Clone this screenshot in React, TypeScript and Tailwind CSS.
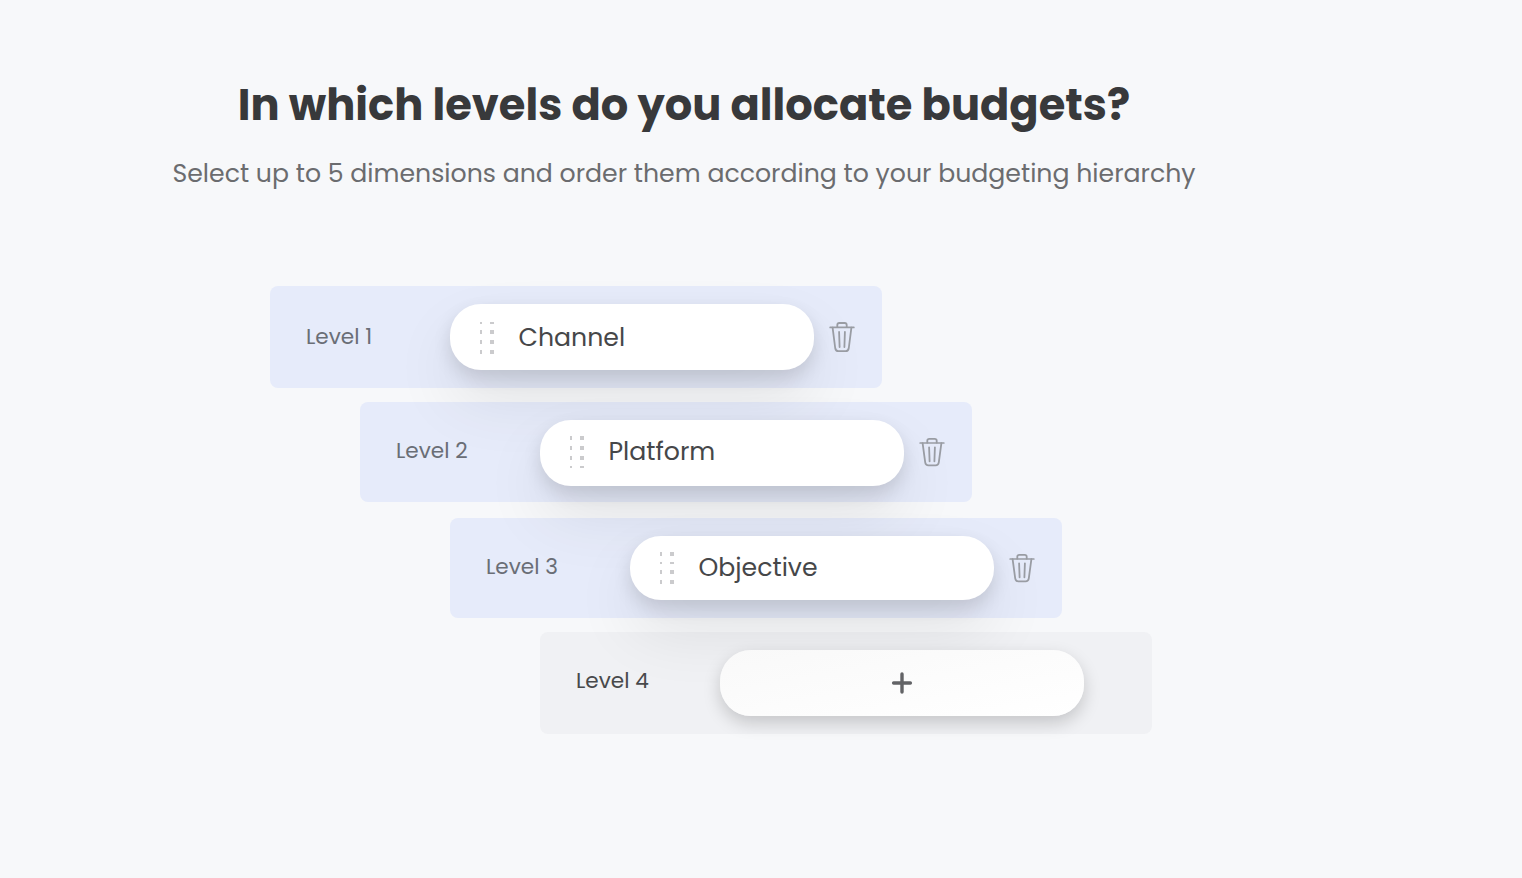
import React from 'react';

type Level = {
  label: string;
  value?: string;
  row: string;
  pill: string;
  labelStyle: string;
  valueStyle: string;
  dots: [number, number][];
  iconHeight: number;
};

const filledPill =
  'bg-white shadow-[0_8px_18px_rgba(0,0,0,0.12),0_30px_64px_rgba(0,0,0,0.09)]';

const levels: Level[] = [
  { label: 'Level 1', value: 'Channel', row: 'ml-[270px] h-[102px] bg-[#3d66ff]/[0.085]', pill: 'h-[66px] ' + filledPill, labelStyle: 'leading-[66px] text-[#6a6e76]', valueStyle: 'mt-[2px]', dots: [[2, 2], [10, 4], [20, 4], [30, 4]], iconHeight: 32 },
  { label: 'Level 2', value: 'Platform', row: 'ml-[360px] mt-[14px] h-[100px] bg-[#3d66ff]/[0.085]', pill: 'h-[66px] ' + filledPill, labelStyle: 'leading-[62px] text-[#6a6e76]', valueStyle: '-mt-[2px]', dots: [[0, 4], [10, 4], [20, 4], [30, 2]], iconHeight: 30 },
  { label: 'Level 3', value: 'Objective', row: 'ml-[450px] mt-[16px] h-[100px] bg-[#3d66ff]/[0.085]', pill: 'h-[64px] ' + filledPill, labelStyle: 'leading-[62px] text-[#6a6e76]', valueStyle: '', dots: [[1, 4], [11, 2], [19, 4], [29, 4]], iconHeight: 30 },
  { label: 'Level 4', row: 'ml-[540px] mt-[14px] h-[102px] bg-[#2b2b60]/[0.035]', pill: 'h-[66px] bg-linear-to-br from-[#f9f9f9] to-white shadow-[0_7px_17px_rgba(0,0,0,0.18)]', labelStyle: 'leading-[62px] text-[#48494b]', valueStyle: '', dots: [], iconHeight: 0 },
];

function Handle({ dots }: { dots: [number, number][] }) {
  return (
    <svg width="16" height="34" viewBox="0 0 16 34" shapeRendering="crispEdges" fill="#cbcbcd">
      {dots.map(([y, h]) => (
        <g key={y}>
          <rect x="0" y={y} width="2" height={h} />
          <rect x="10" y={y} width="4" height={h} />
        </g>
      ))}
    </svg>
  );
}

function Trash({ height }: { height: number }) {
  return (
    <svg width="26" height={height} viewBox="0 0 26 32" preserveAspectRatio="none" fill="none" stroke="#999ca3" strokeWidth="1.8" strokeLinecap="round" strokeLinejoin="round">
      <path d="M1.2 6.4H24.8" />
      <path d="M8.3 6V4Q8.3 2 10.3 2H15.7Q17.7 2 17.7 4V6" />
      <path d="M3.6 6.6L6.2 27Q6.7 30.2 9.4 30.2H16.6Q19.3 30.2 19.8 27L22.4 6.6" />
      <path d="M10.1 11L10.6 26M15.9 11L15.4 26" />
    </svg>
  );
}

export default function App() {
  return (
    <main className="flex h-[878px] w-[1522px] flex-col overflow-hidden bg-[#f7f8fa] font-[Poppins,Inter,sans-serif]">
      <header className="flex w-[1368px] flex-col items-center pt-[75px]">
        <h1 className="h-[60px] text-[43.2px] leading-[60px] font-bold whitespace-nowrap text-[#38393b]">
          In which levels do you allocate budgets?
        </h1>
        <p className="mt-[19px] h-[40px] text-[25.2px] leading-[40px] whitespace-nowrap text-[#6b6c6f]">
          Select up to 5 dimensions and order them according to your budgeting hierarchy
        </p>
      </header>
      <section className="flex flex-col pt-[92px]">
        {levels.map((l) => (
          <div key={l.label} className={'flex w-[612px] items-start rounded-[8px] pt-[18px] pl-9 ' + l.row}>
            <span className={'w-36 text-[21.6px] whitespace-nowrap ' + l.labelStyle}>{l.label}</span>
            <div className={'flex w-[364px] shrink-0 items-center rounded-[31px] ' + l.pill + (l.value ? ' pl-[30px]' : ' justify-center')}>
              {l.value ? (
                <>
                  <Handle dots={l.dots} />
                  <span className={'ml-[22.5px] text-[25.2px] leading-[60px] text-[#464749] ' + l.valueStyle}>{l.value}</span>
                </>
              ) : (
                <svg width="22" height="24" viewBox="0 0 22 24" fill="none" stroke="#626366" strokeWidth="3.4" strokeLinecap="round">
                  <path d="M11 3V21M2.6 12H19.4" />
                </svg>
              )}
            </div>
            {l.value && (
              <div className="mt-[17px] ml-[15px]">
                <Trash height={l.iconHeight} />
              </div>
            )}
          </div>
        ))}
      </section>
    </main>
  );
}
